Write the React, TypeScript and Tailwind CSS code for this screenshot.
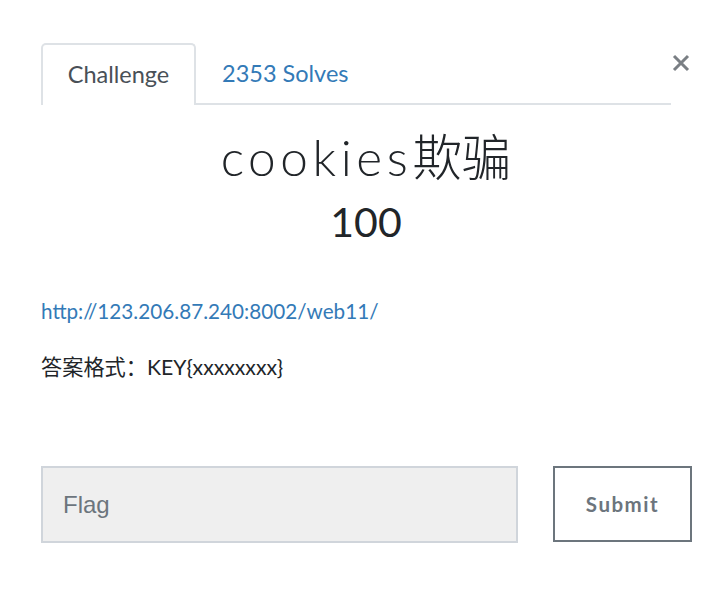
import React from "react";

export default function App() {
  return (
    <div className="w-[719px] h-[597px] bg-white relative" style={{ fontFamily: "Lato, 'Noto Sans CJK SC', sans-serif" }}>
      <div className="pt-[43px] pl-[41px] pr-[48px]">
        <div className="flex items-end border-b-2 border-[#dee2e6] h-[62px]">
          <div className="h-[62px] w-[155px] -mb-[2px] border-2 border-b-0 border-[#dee2e6] rounded-t-[5px] bg-white flex items-center justify-center text-[23.5px] text-[#495057]">
            Challenge
          </div>
          <div className="h-[62px] pl-[26px] pt-[4px] flex items-center text-[23.5px] text-[#337ab7]">2353 Solves</div>
        </div>
      </div>
      <button className="absolute left-[670px] top-[50px] w-[22px] h-[26px] flex items-center justify-center text-[#6c757d]">
        <svg width="18" height="18" viewBox="0 0 18 18">
          <path d="M2 2 L16 16 M16 2 L2 16" stroke="#7a7f84" strokeWidth="3" />
        </svg>
      </button>
      <div className="text-center mt-[22px] pl-[41px] pr-[28px] text-[#212529]">
        <div className="text-[49.5px] leading-[60px] font-light">
          <span className="tracking-[4.6px]">cookies</span>欺骗
        </div>
        <div className="text-[41px] leading-[56px] mt-[7px]">100</div>
      </div>
      <div className="pl-[41px] mt-[48px]">
        <a className="block text-[20.7px] text-[#337ab7] leading-[26px]">http://123.206.87.240:8002/web11/</a>
        <p className="mt-[30px] text-[21.2px] text-[#212529] leading-[26px]">答案格式：KEY{"{xxxxxxxx}"}</p>
      </div>
      <div className="flex pl-[41px] mt-[86px] gap-[35px]">
        <div className="w-[477px] h-[77px] bg-[#efefef] border-2 border-[#d0d5db] flex items-center pl-[20px] text-[24px] text-[#6c757d]" style={{ fontFamily: "'Liberation Sans', Arial, sans-serif" }}>
          Flag
        </div>
        <button className="w-[139px] h-[76px] border-2 border-[#6c757d] bg-white text-[#6c757d] font-bold text-[20.5px] tracking-[1.5px]">
          Submit
        </button>
      </div>
    </div>
  );
}
